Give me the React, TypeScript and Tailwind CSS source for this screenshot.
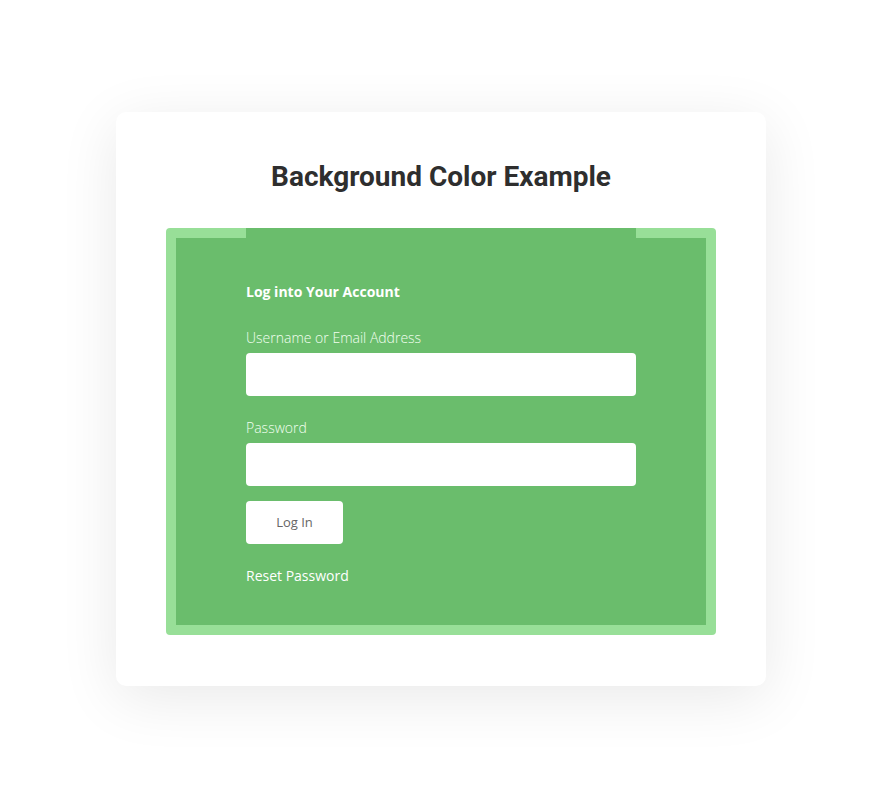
import React from 'react';

export default function App() {
  return (
    <div className="min-h-[793px] bg-white pt-[112px]" style={{ fontFamily: '"Open Sans", sans-serif' }}>
      <div className="ml-[116px] w-[650px] rounded-[10px] bg-white px-[50px] pt-[47px] pb-[51px] shadow-[0_12px_60px_rgba(0,0,0,0.09)]">
        {/* Title */}
        <h2
          className="text-center text-[28px] leading-[36px] font-bold text-[#2e2e2e]"
          style={{ fontFamily: 'Roboto, sans-serif' }}
        >
          Background Color Example
        </h2>

        {/* Green box */}
        <div className="mt-[33px] rounded-[4px] bg-[#98df98] px-[10px] pb-[10px]">
          <div className="flex h-[10px]">
            <div className="w-[70px]" />
            <div className="w-[390px] bg-[#6abd6c]" />
            <div className="flex-1" />
          </div>
          <div className="bg-[#6abd6c] px-[70px] pt-[44px] pb-[39px]">
            <div className="w-[390px]">
              <h3 className="text-[14px] leading-[20px] font-bold text-white">Log into Your Account</h3>

              <label className="mt-[26px] block text-[14px] leading-[20px] font-light text-[#f2fff0]">
                Username or Email Address
              </label>
              <input type="text" className="mt-[5px] block h-[43px] w-full rounded-[4px] bg-white outline-none" />

              <label className="mt-[22px] block text-[14px] leading-[20px] font-light text-[#f2fff0]">
                Password
              </label>
              <input type="password" className="mt-[5px] block h-[43px] w-full rounded-[4px] bg-white outline-none" />

              <button className="mt-[15px] block h-[43px] w-[97px] rounded-[4px] bg-white text-[13px] text-[#666]">
                Log In
              </button>

              <a className="mt-[22px] block text-[14px] leading-[20px] text-white">Reset Password</a>
            </div>
          </div>
        </div>
      </div>
    </div>
  );
}
